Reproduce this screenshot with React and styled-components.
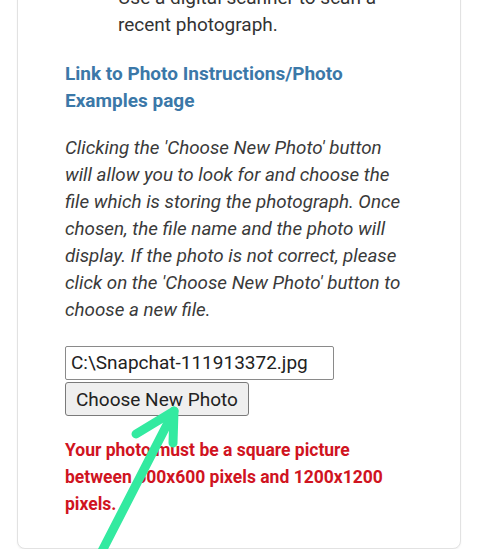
import { createGlobalStyle } from 'styled-components';
import styled from 'styled-components';

const GlobalStyle = createGlobalStyle`
  html, body {
    margin: 0;
    padding: 0;
    background: #ffffff;
  }
  body {
    font-family: Roboto, "Noto Sans", "Liberation Sans", sans-serif;
    color: #333333;
  }
`;

const Page = styled.div`
  padding: 1px 21px 0 17px;
  overflow: hidden;
`;

const Card = styled.div`
  position: relative;
  margin-top: -41px;
  padding: 23px 50px 30px 47px;
  border: 1px solid #e2e2e2;
  border-radius: 8px;
  box-shadow: 0 1px 2px rgba(0, 0, 0, 0.06);
  background: #fff;
`;

const Steps = styled.ul`
  margin: 0;
  padding-left: 53px;
  list-style: none;
  font-size: 19px;
  line-height: 27px;
`;

const Step = styled.li`
  margin: 0;
`;

const InfoLink = styled.a`
  display: block;
  margin-top: 22px;
  font-size: 19px;
  line-height: 27px;
  font-weight: 700;
  color: #3b78a8;
  text-decoration: none;
`;

const Note = styled.p`
  margin: 21px 0 0;
  font-size: 18.8px;
  line-height: 27px;
  font-style: italic;
  color: #3a3a3a;
`;

const PhotoPicker = styled.div`
  display: flex;
  flex-direction: column;
  align-items: flex-start;
  gap: 2px;
  margin-top: 22px;
`;

const FileName = styled.div`
  box-sizing: border-box;
  width: 269px;
  height: 34px;
  padding: 0 5px;
  border: 1px solid #8a8a8a;
  border-radius: 2px;
  font-size: 19px;
  line-height: 32px;
  color: #222;
  background: #fff;
  white-space: nowrap;
`;

const ChooseButton = styled.button`
  box-sizing: border-box;
  height: 34px;
  padding: 0 10px;
  border: 1px solid #7a7a7a;
  border-radius: 3px;
  background: #efefef;
  font-family: inherit;
  font-size: 19px;
  color: #222;
`;

const Warning = styled.p`
  margin: 21px 0 0;
  font-size: 17.5px;
  line-height: 27px;
  font-weight: 700;
  color: #d0141f;
`;

// green marker arrow drawn over the screenshot
const Arrow = styled.svg`
  position: absolute;
  left: 0;
  top: 0;
  width: 100%;
  height: 100%;
  overflow: visible;
  pointer-events: none;
`;

function App() {
  return (
    <>
      <GlobalStyle />
      <Page>
        <Card>
          <Steps>
            <Step>Use a digital scanner to scan a recent photograph.</Step>
          </Steps>

          <InfoLink href="#">Link to Photo Instructions/Photo Examples page</InfoLink>

          <Note>
            Clicking the 'Choose New Photo' button will allow you to look for and choose the
            file which is storing the photograph. Once chosen, the file name and the photo will
            display. If the photo is not correct, please click on the 'Choose New Photo' button to
            choose a new file.
          </Note>

          <PhotoPicker>
            <FileName>C:\Snapchat-111913372.jpg</FileName>
            <ChooseButton type="button">Choose New Photo</ChooseButton>
          </PhotoPicker>

          <Warning>
            Your photo must be a square picture between 600x600 pixels and 1200x1200 pixels.
          </Warning>

          <Arrow>
            <g
              transform="translate(-18 40)"
              stroke="#33eaa0"
              strokeWidth="9"
              strokeLinecap="round"
              strokeLinejoin="round"
              fill="none"
            >
              <path d="M101 552 L174 410" />
              <path d="M136 433 L174 410 L173 442" />
            </g>
          </Arrow>
        </Card>
      </Page>
    </>
  );
}

export default App;
